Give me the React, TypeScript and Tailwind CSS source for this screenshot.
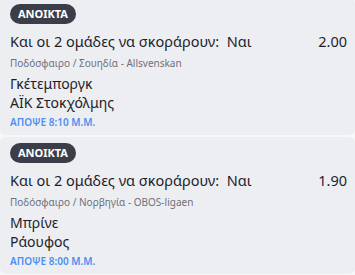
const BETS = [
  {
    market: 'Και οι 2 ομάδες να σκοράρουν:',
    pick: 'Ναι',
    odds: '2.00',
    league: 'Ποδόσφαιρο / Σουηδία - Allsvenskan',
    home: 'Γκέτεμποργκ',
    away: 'ΑΪΚ Στοκχόλμης',
    time: 'ΑΠΟΨΕ 8:10 Μ.Μ.',
  },
  {
    market: 'Και οι 2 ομάδες να σκοράρουν:',
    pick: 'Ναι',
    odds: '1.90',
    league: 'Ποδόσφαιρο / Νορβηγία - OBOS-ligaen',
    home: 'Μπρίνε',
    away: 'Ράουφος',
    time: 'ΑΠΟΨΕ 8:00 Μ.Μ.',
  },
];

export default function App() {
  return (
    <div
      className="w-[355px] h-[275px] overflow-hidden bg-[#f6f7f9]"
      style={{ fontFamily: '"Noto Sans", "Open Sans", sans-serif' }}
    >
      <div className="-mt-[2px] flex flex-col gap-[2px]">
        {BETS.map((b, i) => (
          <div key={i} className="h-[137px] rounded-[6px] bg-[#edeef2] pl-[10px] pr-[8px] pt-[6px]">
            <div className="flex">
              <span className="flex h-[20px] items-center rounded-full bg-[#3b3e49] px-[8px] text-[11px] font-bold text-white">
                ΑΝΟΙΚΤΑ
              </span>
            </div>
            <div className="mt-[7px] flex items-center justify-between text-[14.5px] leading-[20px] text-[#1c1e2b]">
              <span>
                {b.market}&nbsp;&nbsp;{b.pick}
              </span>
              <span>{b.odds}</span>
            </div>
            <div className="mt-[5px] text-[10px] leading-[14px] text-[#6d707b]">{b.league}</div>
            <div className="mt-[4px] text-[14px] leading-[19px] text-[#1c1e2b]">{b.home}</div>
            <div className="text-[14px] leading-[19px] text-[#1c1e2b]">{b.away}</div>
            <div className="mt-[3px] text-[10px] leading-[14px] font-semibold text-[#4c8ef0]">{b.time}</div>
          </div>
        ))}
      </div>
    </div>
  );
}
